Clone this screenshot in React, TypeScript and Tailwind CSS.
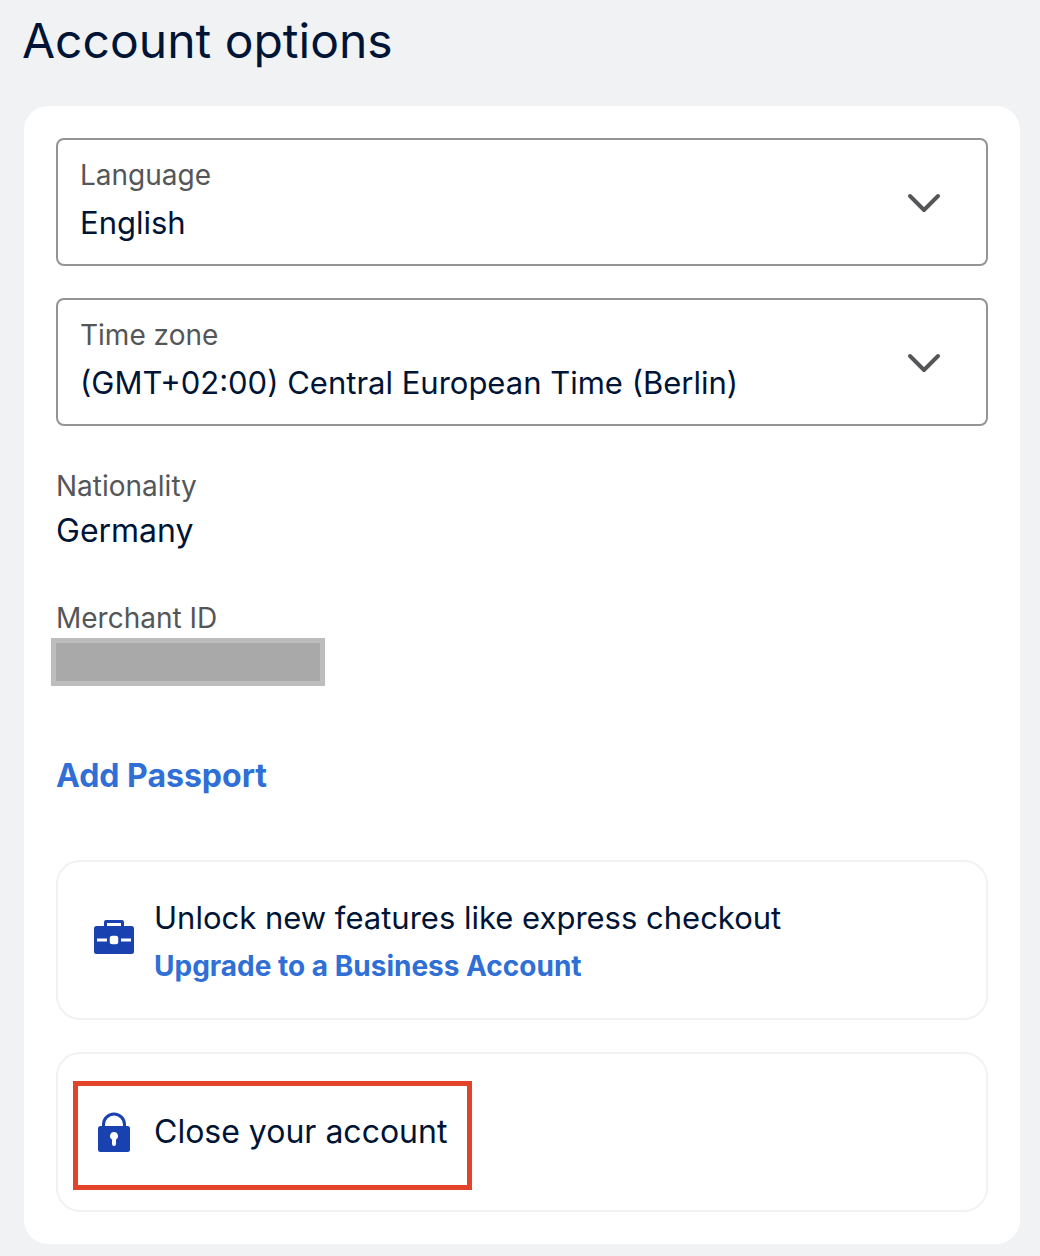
import { ReactNode, useId, useState } from "react"

const ChevronDownIcon = () => (
  <svg
    viewBox="0 0 36 24"
    fill="none"
    stroke="currentColor"
    strokeWidth="4"
    strokeLinecap="round"
    strokeLinejoin="round"
    className="pointer-events-none h-6 w-9 shrink-0 text-[#545658]"
    aria-hidden="true"
  >
    <path d="M4 6l14 14L32 6" />
  </svg>
)

const BriefcaseIcon = () => (
  <svg viewBox="0 0 40 36" className="mb-1.5 h-9 w-10 shrink-0" aria-hidden="true">
    <path
      d="M10 7V3a2 2 0 0 1 2-2h16a2 2 0 0 1 2 2v4h7.500a2.500 2.500 0 0 1 2.500 2.500v23a2.500 2.500 0 0 1-2.500 2.500h-35a2.500 2.500 0 0 1-2.500-2.500v-23A2.500 2.500 0 0 1 2.500 7zM13 7h14V4H13z"
      fill="#1a41b0"
      fillRule="evenodd"
    />
    <path d="M3 19.500h10v3H3zM27 19.500h10v3H27z" fill="#fff" />
    <rect x="15.750" y="16.750" width="8.500" height="8.500" rx="2.500" fill="#fff" />
  </svg>
)

const LockIcon = () => (
  <svg viewBox="0 0 40 40" className="size-10 shrink-0" aria-hidden="true">
    <path d="M9.500 16v-3.500a10.500 10.500 0 0 1 21 0V16" fill="none" stroke="#1a41b0" strokeWidth="3" />
    <rect x="4" y="14" width="32" height="26" rx="2.500" fill="#1a41b0" />
    <path
      d="M20 20a4 4 0 0 0-2 7.460V32a2 2 0 0 0 4 0v-4.540A4 4 0 0 0 20 20z"
      fill="#fff"
    />
  </svg>
)

const SelectField = ({ label, options }: { label: string; options: string[] }) => {
  const id = useId()
  const [value, setValue] = useState(options[0])

  return (
    <div className="flex h-32 items-center rounded-lg border-2 border-[#929496] pr-11 pl-[22px]">
      <div className="flex min-w-0 grow flex-col gap-2 pb-1.5">
        <label htmlFor={id} className="text-[28px] leading-10 text-[#545658]">
          {label}
        </label>
        <select
          id={id}
          value={value}
          onChange={(e) => setValue(e.target.value)}
          className="w-full appearance-none bg-transparent text-[31px] leading-10 outline-none"
        >
          {options.map((option) => (
            <option key={option}>{option}</option>
          ))}
        </select>
      </div>
      <ChevronDownIcon />
    </div>
  )
}

const Detail = ({ label, children }: { label: string; children: ReactNode }) => (
  <div>
    <dt className="text-[28px] leading-10 text-[#545658]">{label}</dt>
    <dd className="text-[32px] leading-[50px]">{children}</dd>
  </div>
)

export default function App() {
  return (
    <main className="min-h-screen bg-[#f1f2f4] pt-[11px] pr-5 pb-3 pl-6 font-['Inter',sans-serif] text-[#001435]">
      <h1 className="-ml-0.5 text-[48px] leading-15">Account options</h1>

      <section className="mt-[35px] rounded-3xl bg-white p-8">
        <div className="flex flex-col gap-8">
          <SelectField label="Language" options={["English", "Deutsch"]} />
          <SelectField
            label="Time zone"
            options={["(GMT+02:00) Central European Time (Berlin)", "(GMT+00:00) London"]}
          />
        </div>

        <dl className="mt-10 flex flex-col gap-[42px]">
          <Detail label="Nationality">Germany</Detail>
          <Detail label="Merchant ID">
            {/* value is masked */}
            <div className="-ml-[5px] h-12 w-[274px] border-5 border-[#bdbdbd] bg-[#a9a9a9]" />
          </Detail>
        </dl>

        <a
          href="#passport"
          className="mt-[66px] inline-block text-[32px] leading-12 font-bold text-[#2f6fd6]"
        >
          Add Passport
        </a>

        <div className="mt-15 flex h-40 items-center gap-5 rounded-3xl border-2 border-[#f1f2f3] px-9">
          <BriefcaseIcon />
          <div className="flex flex-col pt-1">
            <p className="text-[31px] leading-12">Unlock new features like express checkout</p>
            <a href="#upgrade" className="text-[28px] leading-12 font-bold text-[#2f6fd6]">
              Upgrade to a Business Account
            </a>
          </div>
        </div>

        <div className="mt-8 flex h-40 items-center rounded-3xl border-2 border-[#f1f2f3] px-[15px] pt-1.5">
          <button
            type="button"
            className="flex h-[109px] items-center gap-5 border-5 border-[#e2432a] pr-5 pb-1.5 pl-4 text-[32px]"
          >
            <LockIcon />
            Close your account
          </button>
        </div>
      </section>
    </main>
  )
}
